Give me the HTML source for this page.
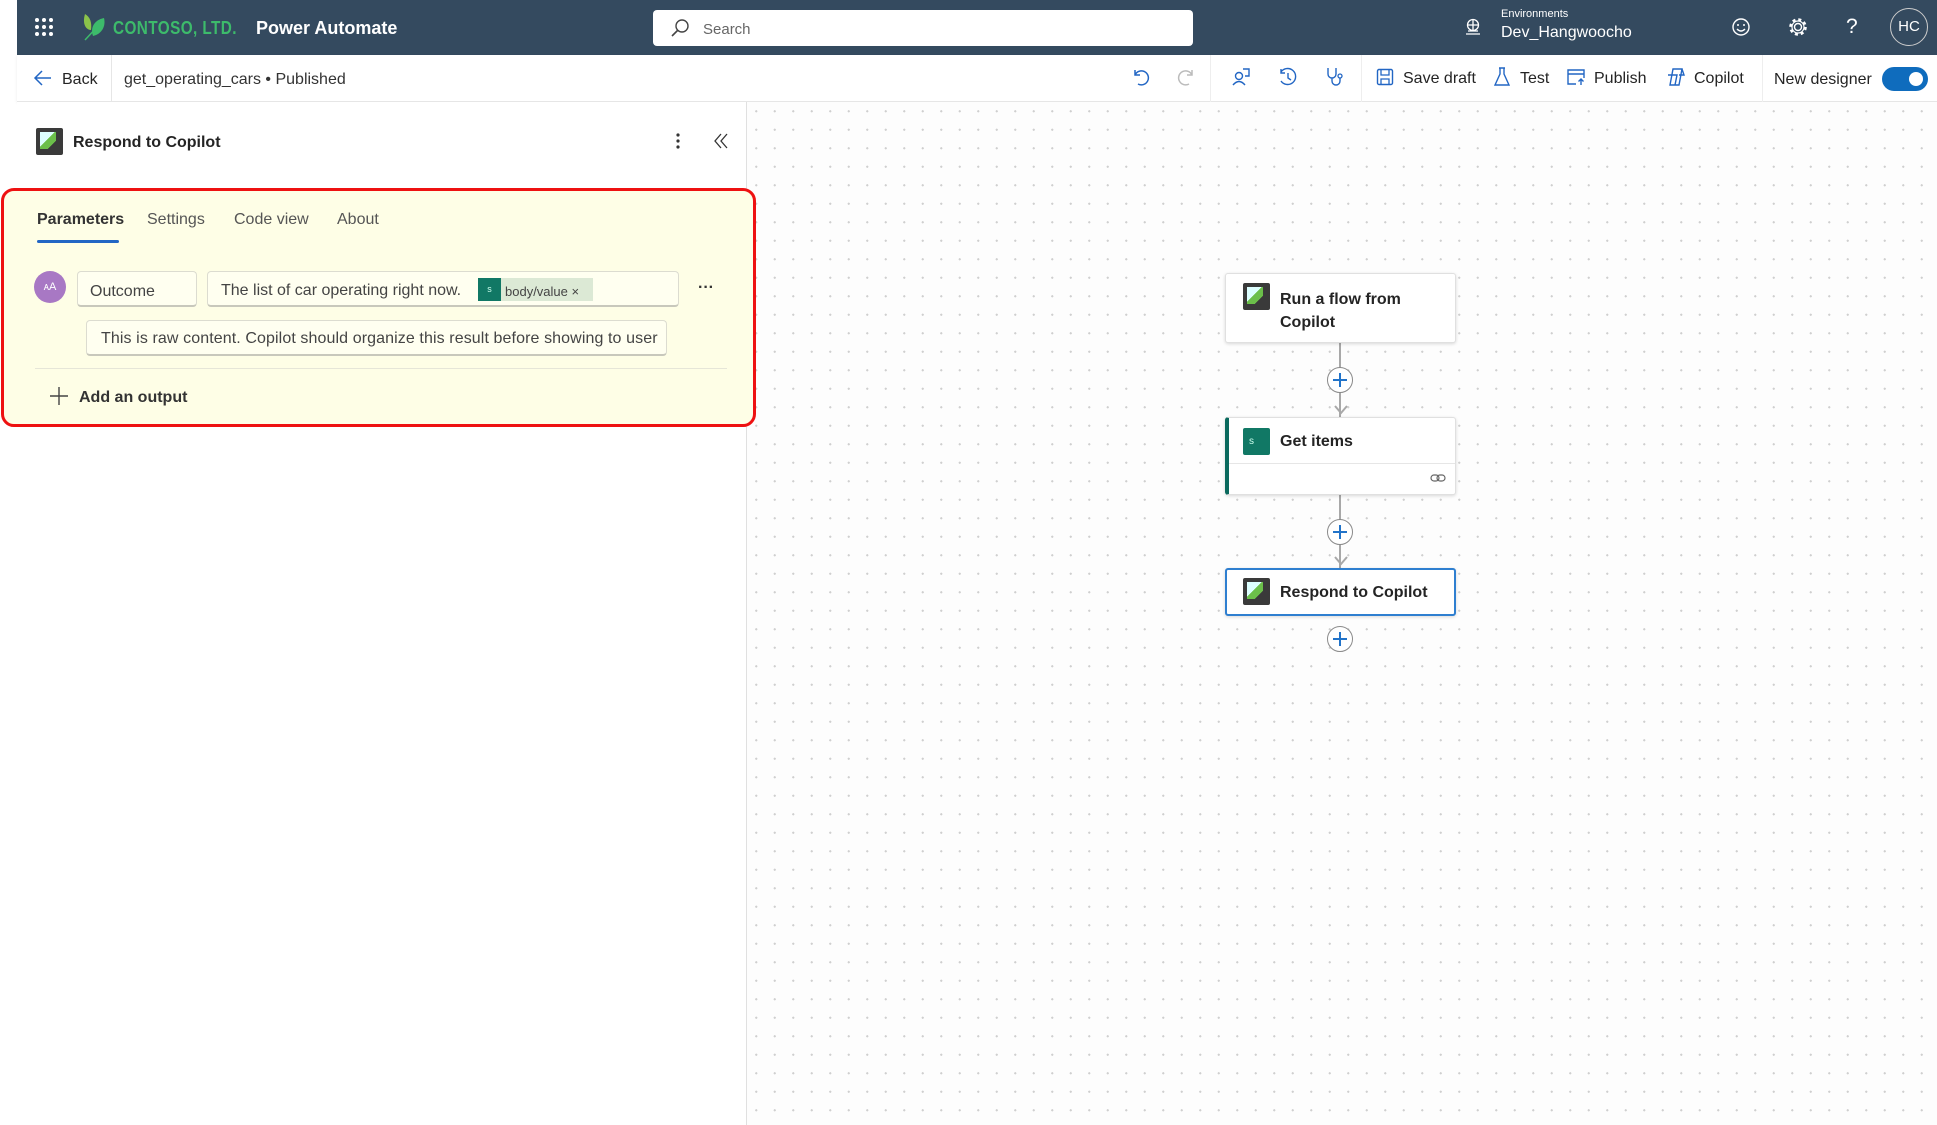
<!DOCTYPE html>
<html><head><meta charset="utf-8"><style>
*{box-sizing:border-box;margin:0;padding:0}
body{width:1937px;height:1125px;position:relative;overflow:hidden;background:#fff;font-family:"Segoe UI","Liberation Sans",sans-serif;color:#242424}
.abs{position:absolute}
.hdr{left:17px;top:0;width:1920px;height:55px;background:#344a5f}
.tb{left:17px;top:55px;width:1920px;height:47px;background:#fff;border-bottom:1px solid #e6e6e6;box-shadow:0 1px 3px rgba(0,0,0,.08)}
.canvas{left:747px;top:102px;width:1190px;height:1023px;background-color:#fdfdfd;background-image:radial-gradient(#cfcfcf 1px,transparent 1.2px);background-size:18.5px 18.5px}
.pane{left:17px;top:102px;width:730px;height:1023px;background:#fff;border-right:1px solid #e0e0e0}
.t{position:absolute;white-space:nowrap;margin-top:3px}
.box{position:absolute;background:#fffff0;border:1px solid #dcdcd0;border-bottom:2px solid #c8c8bc;border-radius:4px}
.card{position:absolute;background:#fff;border:1px solid #e0e0e0;box-shadow:0 1px 3px rgba(0,0,0,.15);border-radius:3px}
.plus{position:absolute;width:26px;height:26px;border-radius:50%;border:1.5px solid #8a8a8a;background:#fff}
.plus:before,.plus:after{content:"";position:absolute;background:#2173c9;left:50%;top:50%;transform:translate(-50%,-50%)}
.plus:before{width:14px;height:2px}.plus:after{width:2px;height:14px}
.line{position:absolute;width:2px;background:#a8a8a8;left:1339px}
.img{position:absolute;width:27px;height:27px;background:#3a3a3a;border-radius:2px;overflow:hidden}
.img:after{content:"";position:absolute;left:4px;top:4px;width:16px;height:17px;background:linear-gradient(135deg,#dff 0 45%,#6bbf4a 45% 75%,#3a3a3a 75%)}
</style></head><body>
<div class="abs hdr"></div>
<svg class="abs" style="left:34px;top:17px" width="20" height="20"><g fill="#fff"><circle cx="3" cy="3" r="2"/><circle cx="10" cy="3" r="2"/><circle cx="17" cy="3" r="2"/><circle cx="3" cy="10" r="2"/><circle cx="10" cy="10" r="2"/><circle cx="17" cy="10" r="2"/><circle cx="3" cy="17" r="2"/><circle cx="10" cy="17" r="2"/><circle cx="17" cy="17" r="2"/></g></svg>
<svg class="abs" style="left:82px;top:12px" width="26" height="30"><path d="M3 2 C0 12 4 18 9 18 C10 10 8 5 3 2Z" fill="#8bc34a"/><path d="M22 6 C12 8 8 16 11 24 C20 22 24 14 22 6Z" fill="#3dbb6b"/><path d="M3 28 L16 14" stroke="#3dbb6b" stroke-width="1.5"/></svg>
<div class="t" style="left:113px;top:15px;font-size:18px;font-weight:bold;color:#3dbb6b;font-family:'Liberation Sans',sans-serif;letter-spacing:0.5px;transform:scaleX(.85);transform-origin:left">CONTOSO, LTD.</div>
<div class="t" style="left:256px;top:15px;font-size:18px;font-weight:600;color:#fff">Power Automate</div>
<div class="abs" style="left:653px;top:10px;width:540px;height:36px;background:#fff;border-radius:4px"></div>
<svg class="abs" style="left:670px;top:18px" width="20" height="20"><circle cx="12" cy="8" r="6" fill="none" stroke="#444" stroke-width="1.4"/><path d="M8 12 L2 18" stroke="#444" stroke-width="1.6"/></svg>
<div class="t" style="left:703px;top:18px;font-size:15px;color:#666">Search</div>
<svg class="abs" style="left:1464px;top:18px" width="18" height="18"><circle cx="9" cy="7" r="5.5" fill="none" stroke="#fff" stroke-width="1.3"/><path d="M3.5 7h11M9 1.5v11M2 16h14M4 13h10" stroke="#fff" stroke-width="1.3"/></svg>
<div class="t" style="left:1501px;top:5px;font-size:11px;color:#fff">Environments</div>
<div class="t" style="left:1501px;top:21px;font-size:16px;color:#fff">Dev_Hangwoocho</div>
<svg class="abs" style="left:1731px;top:17px" width="20" height="20"><circle cx="10" cy="10" r="8" fill="none" stroke="#fff" stroke-width="1.4"/><circle cx="7" cy="8" r="1" fill="#fff"/><circle cx="13" cy="8" r="1" fill="#fff"/><path d="M6 12 Q10 16 14 12" fill="none" stroke="#fff" stroke-width="1.4"/></svg>
<svg class="abs" style="left:1787px;top:16px" width="22" height="22"><circle cx="11" cy="11" r="3.5" fill="none" stroke="#fff" stroke-width="1.4"/><circle cx="11" cy="11" r="7.5" fill="none" stroke="#fff" stroke-width="2.6" stroke-dasharray="3 2.9"/><circle cx="11" cy="11" r="6" fill="none" stroke="#fff" stroke-width="1.2"/></svg>
<div class="t" style="left:1846px;top:12px;font-size:21px;color:#fff">?</div>
<div class="abs" style="left:1890px;top:8px;width:38px;height:38px;border:1.5px solid #ccc;border-radius:50%;color:#fff;font-size:15px;text-align:center;line-height:35px">HC</div>

<div class="abs tb"></div>
<svg class="abs" style="left:33px;top:68px" width="20" height="20"><path d="M18 10H3M9 3L2 10l7 7" fill="none" stroke="#2266c4" stroke-width="1.5"/></svg>
<div class="t" style="left:62px;top:68px;font-size:16px">Back</div>
<div class="abs" style="left:111px;top:55px;width:1px;height:47px;background:#e6e6e6"></div>
<div class="t" style="left:124px;top:68px;font-size:16px;color:#333">get_operating_cars • Published</div>
<svg class="abs" style="left:1130px;top:67px" width="20" height="20"><path d="M5 3v5h5M5 8 A7 7 0 1 1 8 17" fill="none" stroke="#2266c4" stroke-width="1.5"/></svg>
<svg class="abs" style="left:1177px;top:67px" width="20" height="20"><path d="M15 3v5h-5M15 8 A7 7 0 1 0 12 17" fill="none" stroke="#bbb" stroke-width="1.5"/></svg>
<div class="abs" style="left:1210px;top:55px;width:1px;height:47px;background:#eee"></div>
<svg class="abs" style="left:1231px;top:67px" width="20" height="20"><circle cx="8" cy="9" r="3.5" fill="none" stroke="#2266c4" stroke-width="1.4"/><path d="M2 18 Q8 11 14 18M12 2h6v7h-4" fill="none" stroke="#2266c4" stroke-width="1.4"/></svg>
<svg class="abs" style="left:1278px;top:67px" width="20" height="20"><path d="M3 5 A8 8 0 1 1 3 14M3 2v4h4M10 6v5l3 2" fill="none" stroke="#2266c4" stroke-width="1.4"/></svg>
<svg class="abs" style="left:1324px;top:66px" width="20" height="22"><path d="M4 2v6a4 4 0 0 0 8 0V2M8 12v3a4 4 0 0 0 8 0v-3" fill="none" stroke="#2266c4" stroke-width="1.4"/><circle cx="16" cy="10" r="2" fill="none" stroke="#2266c4" stroke-width="1.3"/></svg>
<div class="abs" style="left:1361px;top:55px;width:1px;height:47px;background:#eee"></div>
<svg class="abs" style="left:1376px;top:68px" width="18" height="18"><rect x="1.5" y="1.5" width="15" height="15" rx="1.5" fill="none" stroke="#2266c4" stroke-width="1.4"/><path d="M5 2v5h8V2M5 16v-5h8v5" fill="none" stroke="#2266c4" stroke-width="1.3"/></svg>
<div class="t" style="left:1403px;top:67px;font-size:16px">Save draft</div>
<svg class="abs" style="left:1493px;top:67px" width="18" height="20"><path d="M6 1h6M7 1v6L2 18h14L11 7V1" fill="none" stroke="#2266c4" stroke-width="1.4"/></svg>
<div class="t" style="left:1520px;top:67px;font-size:16px">Test</div>
<svg class="abs" style="left:1566px;top:68px" width="20" height="18"><path d="M10 16H2V2h16v8M2 6h16M15 17v-6m-2.5 2.5L15 11l2.5 2.5" fill="none" stroke="#2266c4" stroke-width="1.4"/></svg>
<div class="t" style="left:1594px;top:67px;font-size:16px">Publish</div>
<svg class="abs" style="left:1665px;top:66px" width="22" height="22"><path d="M8 3h9l-3 16H5zM3 9h9l-2 10M17 3l2 6h-5" fill="none" stroke="#2266c4" stroke-width="1.4"/></svg>
<div class="t" style="left:1694px;top:67px;font-size:16px">Copilot</div>
<div class="abs" style="left:1762px;top:55px;width:1px;height:47px;background:#eee"></div>
<div class="t" style="left:1774px;top:68px;font-size:16px">New designer</div>
<div class="abs" style="left:1882px;top:67px;width:46px;height:24px;background:#0f6cbd;border-radius:12px"><div class="abs" style="left:27px;top:5px;width:14px;height:14px;background:#fff;border-radius:50%"></div></div>

<div class="abs canvas"></div>
<div class="abs pane"></div>
<div class="img" style="left:36px;top:128px"></div>
<div class="t" style="left:73px;top:131px;font-size:16px;font-weight:600">Respond to Copilot</div>
<svg class="abs" style="left:674px;top:132px" width="8" height="20"><circle cx="4" cy="3" r="1.6" fill="#333"/><circle cx="4" cy="9" r="1.6" fill="#333"/><circle cx="4" cy="15" r="1.6" fill="#333"/></svg>
<svg class="abs" style="left:712px;top:132px" width="18" height="18"><path d="M9 2L3 9l6 7M15 2L9 9l6 7" fill="none" stroke="#333" stroke-width="1.3"/></svg>

<div class="abs" style="left:1px;top:188px;width:755px;height:239px;background:#fefee6;border:3px solid #ee1111;border-radius:13px"></div>
<div class="t" style="left:37px;top:208px;font-size:16px;font-weight:600;color:#333">Parameters</div>
<div class="t" style="left:147px;top:208px;font-size:16px;color:#555">Settings</div>
<div class="t" style="left:234px;top:208px;font-size:16px;color:#555">Code view</div>
<div class="t" style="left:337px;top:208px;font-size:16px;color:#555">About</div>
<div class="abs" style="left:37px;top:240px;width:82px;height:3px;background:#2266c4;border-radius:2px"></div>
<div class="abs" style="left:34px;top:271px;width:32px;height:32px;border-radius:50%;background:#a878c4;color:#fff;font-size:11px;text-align:center;line-height:32px">ᴀA</div>
<div class="box" style="left:77px;top:271px;width:120px;height:36px"></div>
<div class="t" style="left:90px;top:280px;font-size:16px;color:#444">Outcome</div>
<div class="box" style="left:207px;top:271px;width:472px;height:36px"></div>
<div class="t" style="left:221px;top:279px;font-size:16px;color:#444">The list of car operating right now.</div>
<div class="abs" style="left:478px;top:278px;width:115px;height:23px;background:#dce9d5"></div>
<div class="abs" style="left:478px;top:278px;width:23px;height:23px;background:#117865;color:#cfe;font-size:9px;text-align:center;line-height:23px">s</div>
<div class="t" style="left:505px;top:281px;font-size:13px;color:#444">body/value ×</div>
<div class="t" style="left:698px;top:276px;font-size:16px;color:#333;font-weight:bold">···</div>
<div class="box" style="left:86px;top:320px;width:581px;height:36px;overflow:hidden"><div class="t" style="left:14px;top:6px;font-size:16px;color:#444;letter-spacing:0.1px">This is raw content. Copilot should organize this result before showing to user</div></div>
<div class="abs" style="left:35px;top:368px;width:692px;height:1px;background:#e6e6d8"></div>
<svg class="abs" style="left:49px;top:386px" width="20" height="20"><path d="M10 1v18M1 10h18" stroke="#444" stroke-width="1.4"/></svg>
<div class="t" style="left:79px;top:386px;font-size:16px;font-weight:600;color:#333">Add an output</div>

<div class="line" style="top:342px;height:75px"></div>
<div class="line" style="top:494px;height:74px"></div>
<svg class="abs" style="left:1333px;top:404px" width="16" height="12"><path d="M2 2l6 7 6-7" fill="none" stroke="#a8a8a8" stroke-width="2"/></svg>
<svg class="abs" style="left:1333px;top:555px" width="16" height="12"><path d="M2 2l6 7 6-7" fill="none" stroke="#a8a8a8" stroke-width="2"/></svg>
<div class="plus" style="left:1327px;top:367px"></div>
<div class="plus" style="left:1327px;top:519px"></div>
<div class="plus" style="left:1327px;top:626px"></div>
<div class="card" style="left:1225px;top:273px;width:231px;height:70px"></div>
<div class="img" style="left:1243px;top:283px"></div>
<div class="t" style="left:1280px;top:285px;font-size:16px;font-weight:600;line-height:23px">Run a flow from<br>Copilot</div>
<div class="card" style="left:1225px;top:417px;width:231px;height:78px;border-left:4px solid #0b6a5e"></div>
<div class="abs" style="left:1229px;top:463px;width:226px;height:1px;background:#e6e6e6"></div>
<div class="abs" style="left:1243px;top:428px;width:27px;height:27px;background:#117865;border-radius:2px;color:#cfe;font-size:10px;line-height:27px;padding-left:6px">s</div>
<div class="t" style="left:1280px;top:430px;font-size:16px;font-weight:600">Get items</div>
<svg class="abs" style="left:1430px;top:472px" width="16" height="12"><rect x="1" y="3" width="8" height="6" rx="3" fill="none" stroke="#666" stroke-width="1.2"/><rect x="7" y="3" width="8" height="6" rx="3" fill="none" stroke="#666" stroke-width="1.2"/></svg>
<div class="card" style="left:1225px;top:568px;width:231px;height:48px;border:2px solid #2f7fd0"></div>
<div class="img" style="left:1243px;top:578px"></div>
<div class="t" style="left:1280px;top:581px;font-size:16px;font-weight:600">Respond to Copilot</div>
</body></html>
